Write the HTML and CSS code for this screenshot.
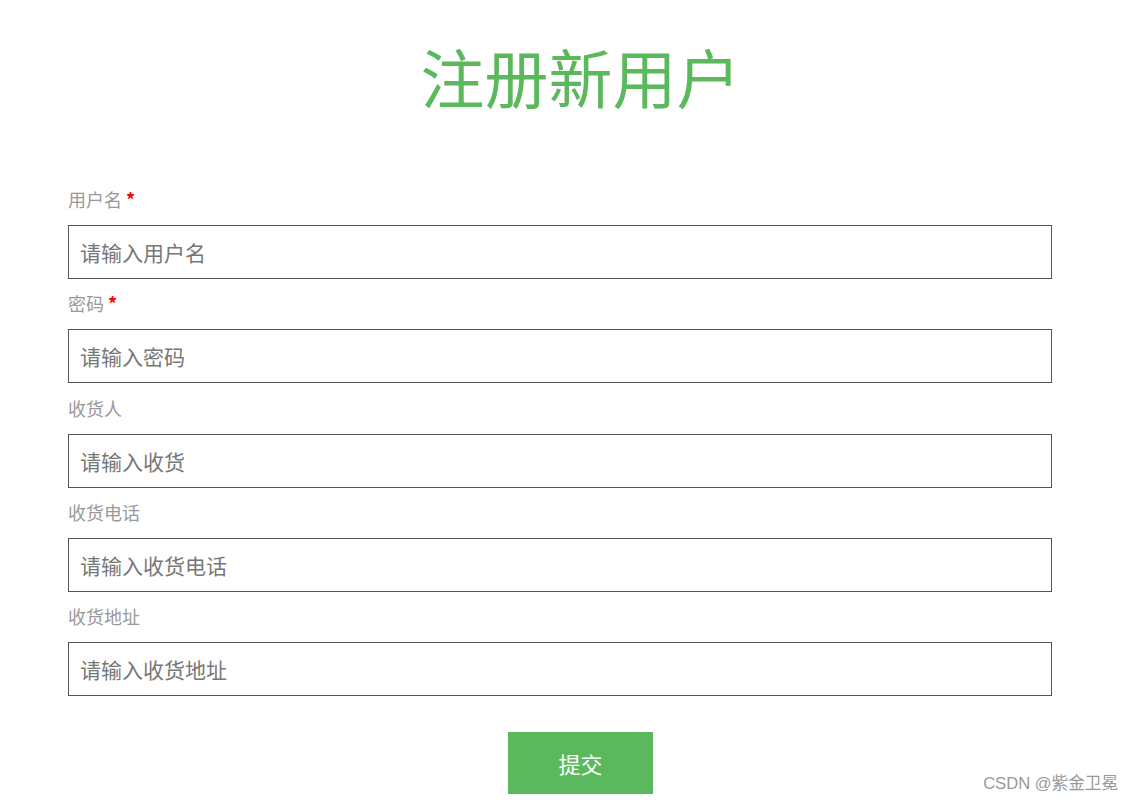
FILE: index.html
```html
<!DOCTYPE html>
<html lang="zh">
<head>
<meta charset="utf-8">
<title>注册新用户</title>
<link rel="stylesheet" href="styles.css">
</head>
<body>
<div class="page">
  <h1 class="title">注册新用户</h1>
  <form class="form">
    <div class="field">
      <label class="label">用户名 <span class="req">*</span></label>
      <input class="input" type="text" placeholder="请输入用户名">
    </div>
    <div class="field">
      <label class="label">密码 <span class="req">*</span></label>
      <input class="input" type="password" placeholder="请输入密码">
    </div>
    <div class="field">
      <label class="label">收货人</label>
      <input class="input" type="text" placeholder="请输入收货">
    </div>
    <div class="field">
      <label class="label">收货电话</label>
      <input class="input" type="text" placeholder="请输入收货电话">
    </div>
    <div class="field">
      <label class="label">收货地址</label>
      <input class="input" type="text" placeholder="请输入收货地址">
    </div>
    <div class="actions">
      <button class="submit" type="button">提交</button>
    </div>
  </form>
</div>
<div class="watermark">CSDN @紫金卫冕</div>
</body>
</html>
```
FILE: styles.css
```css
html, body {
  margin: 0;
  padding: 0;
  background: #fff;
  font-family: "Noto Sans CJK SC", "Noto Sans", sans-serif;
}
.page {
  width: 984px;
  margin-left: 68px;
  padding-top: 34px;
}
.title {
  margin: 0;
  text-align: center;
  font-size: 64px;
  line-height: 82px;
  font-weight: 400;
  color: #5cb85c;
  padding-left: 41px;
}
.form {
  margin-top: 70px;
  display: flex;
  flex-direction: column;
}
.field {
  display: flex;
  flex-direction: column;
  margin-bottom: 11.25px;
}
.label {
  font-size: 18px;
  line-height: 26px;
  color: #999;
  margin-bottom: 13px;
}
.req {
  color: #f00;
  font-weight: 700;
}
.input {
  box-sizing: border-box;
  width: 984px;
  height: 54px;
  margin: 0;
  border: 1px solid #555;
  padding: 0 11px;
  font-family: "Noto Sans CJK SC", "Noto Sans", sans-serif;
  font-size: 21px;
  color: #555;
  outline: none;
}
.input::placeholder {
  color: #777;
}
.actions {
  display: flex;
  padding-left: 440px;
  margin-top: 25px;
}
.submit {
  width: 145px;
  height: 62px;
  border: none;
  background: #5cb85c;
  color: #fff;
  font-family: "Noto Sans CJK SC", "Noto Sans", sans-serif;
  font-size: 22px;
  cursor: pointer;
}
.watermark {
  position: absolute;
  right: 16px;
  bottom: 8px;
  font-size: 16.6px;
  color: #999;
  font-family: "Liberation Sans", "Noto Sans CJK SC", sans-serif;
}
```
